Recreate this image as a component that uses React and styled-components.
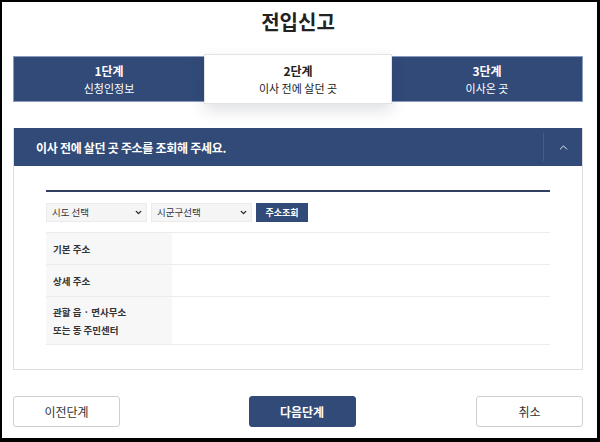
import React, { useState } from 'react';
import styled, { createGlobalStyle } from 'styled-components';
import { ChevronUp, ChevronDown } from 'lucide-react';

const NAVY = '#314a78';

const GlobalStyle = createGlobalStyle`
  html, body {
    margin: 0;
    padding: 0;
    background: #000;
  }
  body {
    font-family: "Noto Sans CJK KR", "Noto Sans", sans-serif;
    color: #333;
  }
`;

const steps = [
  { no: '1단계', name: '신청인정보' },
  { no: '2단계', name: '이사 전에 살던 곳' },
  { no: '3단계', name: '이사온 곳' },
];

const rows = [
  { label: ['기본 주소'] },
  { label: ['상세 주소'] },
  { label: ['관할 읍 · 면사무소', '또는 동 주민센터'], tall: true },
];

const App = () => {
  const [open, setOpen] = useState(true);
  const current = 1;

  return (
    <>
      <GlobalStyle />
      <Frame>
        <Title>전입신고</Title>

        <Steps>
          {steps.map((s, i) => (
            <Step key={s.no} active={i === current}>
              <StepNo>{s.no}</StepNo>
              <StepName>{s.name}</StepName>
            </Step>
          ))}
        </Steps>

        <Panel>
          <PanelHead>
            <PanelTitle>이사 전에 살던 곳 주소를 조회해 주세요.</PanelTitle>
            <ToggleButton onClick={() => setOpen(!open)}>
              {open ? <ChevronUp size={13} strokeWidth={1.6} /> : <ChevronDown size={13} strokeWidth={1.6} />}
            </ToggleButton>
          </PanelHead>

          {open && (
            <PanelBody>
              <SearchRow>
                <SelectWrap>
                  <Select defaultValue="">
                    <option value="">시도 선택</option>
                  </Select>
                  <SelectArrow><ChevronDown size={9} strokeWidth={3.5} /></SelectArrow>
                </SelectWrap>
                <SelectWrap>
                  <Select defaultValue="">
                    <option value="">시군구선택</option>
                  </Select>
                  <SelectArrow><ChevronDown size={9} strokeWidth={3.5} /></SelectArrow>
                </SelectWrap>
                <SearchButton>주소조회</SearchButton>
              </SearchRow>

              <Table>
                {rows.map((r) => (
                  <Row key={r.label[0]} tall={r.tall}>
                    <Label>
                      {r.label.map((l) => (
                        <span key={l}>{l}</span>
                      ))}
                    </Label>
                    <Value />
                  </Row>
                ))}
              </Table>
            </PanelBody>
          )}
        </Panel>

        <Actions>
          <ActionButton>이전단계</ActionButton>
          <ActionButton primary>다음단계</ActionButton>
          <ActionButton>취소</ActionButton>
        </Actions>
      </Frame>
    </>
  );
};

const Frame = styled.div`
  box-sizing: border-box;
  margin: 2px 3px 4px 2px;
  height: 436px;
  background: #fff;
  padding: 0 14px 0 11px;
  display: flex;
  flex-direction: column;
`;

const Title = styled.h1`
  margin: 0;
  height: 40px;
  line-height: 40px;
  text-align: center;
  font-size: 20px;
  font-weight: 700;
  color: #222;
`;

const Steps = styled.div`
  margin-top: 14px;
  display: grid;
  grid-template-columns: 190px 188px 1fr;
  height: 46px;
  box-sizing: border-box;
  background: ${NAVY};
  border: 1px solid #8b9cbc;
`;

const Step = styled.div`
  display: flex;
  flex-direction: column;
  align-items: center;
  justify-content: center;
  color: ${(p) => (p.active ? '#222' : '#fff')};
  background: ${(p) => (p.active ? '#fff' : 'transparent')};
  position: relative;
  margin: ${(p) => (p.active ? '-3px 0' : '0')};
  border: ${(p) => (p.active ? '1px solid #e3e3e3' : 'none')};
  box-shadow: ${(p) => (p.active ? '0 6px 14px rgba(40, 50, 80, 0.15)' : 'none')};
  z-index: ${(p) => (p.active ? 1 : 0)};
`;

const StepNo = styled.div`
  font-size: 12px;
  font-weight: 700;
  line-height: 18px;
`;

const StepName = styled.div`
  font-size: 11px;
  line-height: 16px;
`;

const Panel = styled.section`
  margin-top: 26px;
  border: 1px solid #dedede;
  border-top: none;
  box-sizing: border-box;
  height: 242px;
`;

const PanelHead = styled.div`
  height: 38px;
  background: ${NAVY};
  display: flex;
  align-items: center;
  padding-left: 22px;
`;

const PanelTitle = styled.h2`
  flex: 1;
  margin: 0;
  font-size: 12px;
  font-weight: 700;
  color: #fff;
  letter-spacing: -0.3px;
`;

const ToggleButton = styled.button`
  width: 39px;
  height: 28px;
  border: none;
  border-left: 1px solid #435d8a;
  background: transparent;
  color: #fff;
  display: flex;
  align-items: center;
  justify-content: center;
  padding: 0;
  cursor: pointer;
`;

const PanelBody = styled.div`
  padding: 24px 32px 0 32px;
`;

const SearchRow = styled.div`
  border-top: 2px solid #2f3f5f;
  padding-top: 11px;
  display: flex;
  align-items: flex-start;
  gap: 4px;
  height: 19px;
`;

const SelectWrap = styled.div`
  position: relative;
  width: 101px;
  height: 19px;
  display: flex;
`;

const Select = styled.select`
  appearance: none;
  width: 100%;
  height: 19px;
  box-sizing: border-box;
  border: 1px solid #ebebeb;
  background: #f5f5f5;
  font-family: inherit;
  font-size: 9.5px;
  line-height: 17px;
  color: #333;
  padding: 0 0 0 5px;
  margin: 0;
  border-radius: 0;
  outline: none;
`;

const SelectArrow = styled.span`
  position: absolute;
  right: 4px;
  top: 5px;
  color: #222;
  display: flex;
  pointer-events: none;
`;

const SearchButton = styled.button`
  width: 52px;
  height: 19px;
  border: none;
  background: ${NAVY};
  color: #fff;
  font-family: inherit;
  font-size: 9px;
  font-weight: 700;
  padding: 0;
  margin: 0;
  cursor: pointer;
`;

const Table = styled.div`
  margin-top: 10px;
  border-top: 1px solid #ececec;
`;

const Row = styled.div`
  display: grid;
  grid-template-columns: 126px 1fr;
  height: ${(p) => (p.tall ? '48px' : '32px')};
  border-bottom: 1px solid #ececec;
  box-sizing: border-box;
`;

const Label = styled.div`
  background: #f7f7f7;
  display: flex;
  flex-direction: column;
  justify-content: center;
  padding-left: 7px;
  font-size: 9.5px;
  font-weight: 700;
  color: #333;
  line-height: 18px;
`;

const Value = styled.div``;

const Actions = styled.div`
  margin-top: 26px;
  display: flex;
  justify-content: space-between;
`;

const ActionButton = styled.button`
  width: 107px;
  height: 31px;
  box-sizing: border-box;
  border-radius: 3px;
  border: 1px solid ${(p) => (p.primary ? NAVY : '#cfcfcf')};
  background: ${(p) => (p.primary ? NAVY : '#fff')};
  color: ${(p) => (p.primary ? '#fff' : '#333')};
  font-family: inherit;
  font-size: 12px;
  font-weight: ${(p) => (p.primary ? 700 : 400)};
  margin-left: ${(p) => (p.primary ? '8px' : '0')};
  cursor: pointer;
`;

export default App;
